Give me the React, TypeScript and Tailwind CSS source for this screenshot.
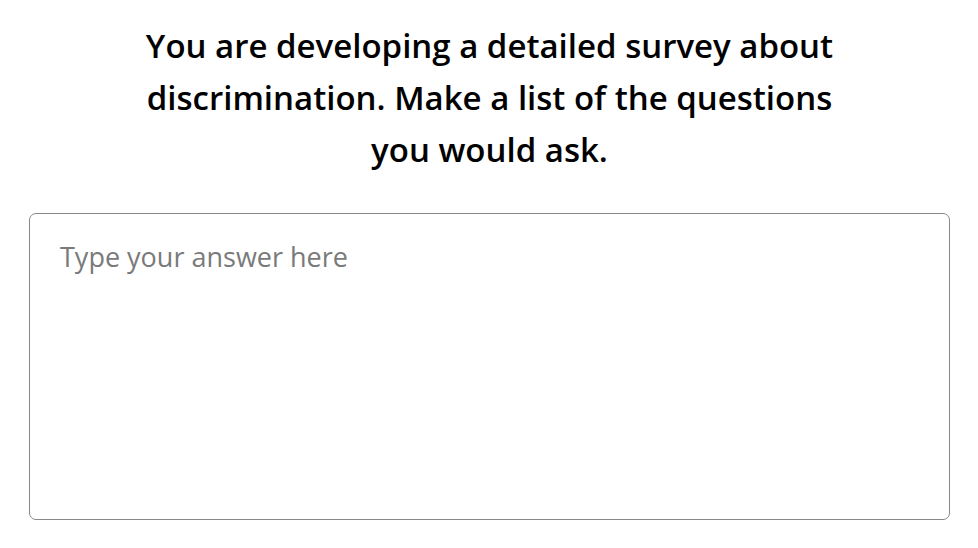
import { useState } from 'react'

export default function App() {
  const [answer, setAnswer] = useState('')

  return (
    <main className="min-h-screen bg-white pl-[29px] pr-[28px] pt-[20px] font-['Open_Sans',sans-serif]">
      <h1 className="mx-auto max-w-[760px] text-center text-[33px] font-semibold leading-[52px] text-black">
        You are developing a detailed survey about
        <br />
        discrimination. Make a list of the questions
        <br />
        you would ask.
      </h1>

      <textarea
        value={answer}
        onChange={(e) => setAnswer(e.target.value)}
        placeholder="Type your answer here"
        className="mt-[37px] block h-[307px] w-full resize-none rounded-[7px] border-[1.5px] border-[#888888] pl-[30px] pr-[29px] py-[26px] text-[27px] leading-[34px] text-black outline-none placeholder:text-[#7a7a7a]"
      />
    </main>
  )
}
